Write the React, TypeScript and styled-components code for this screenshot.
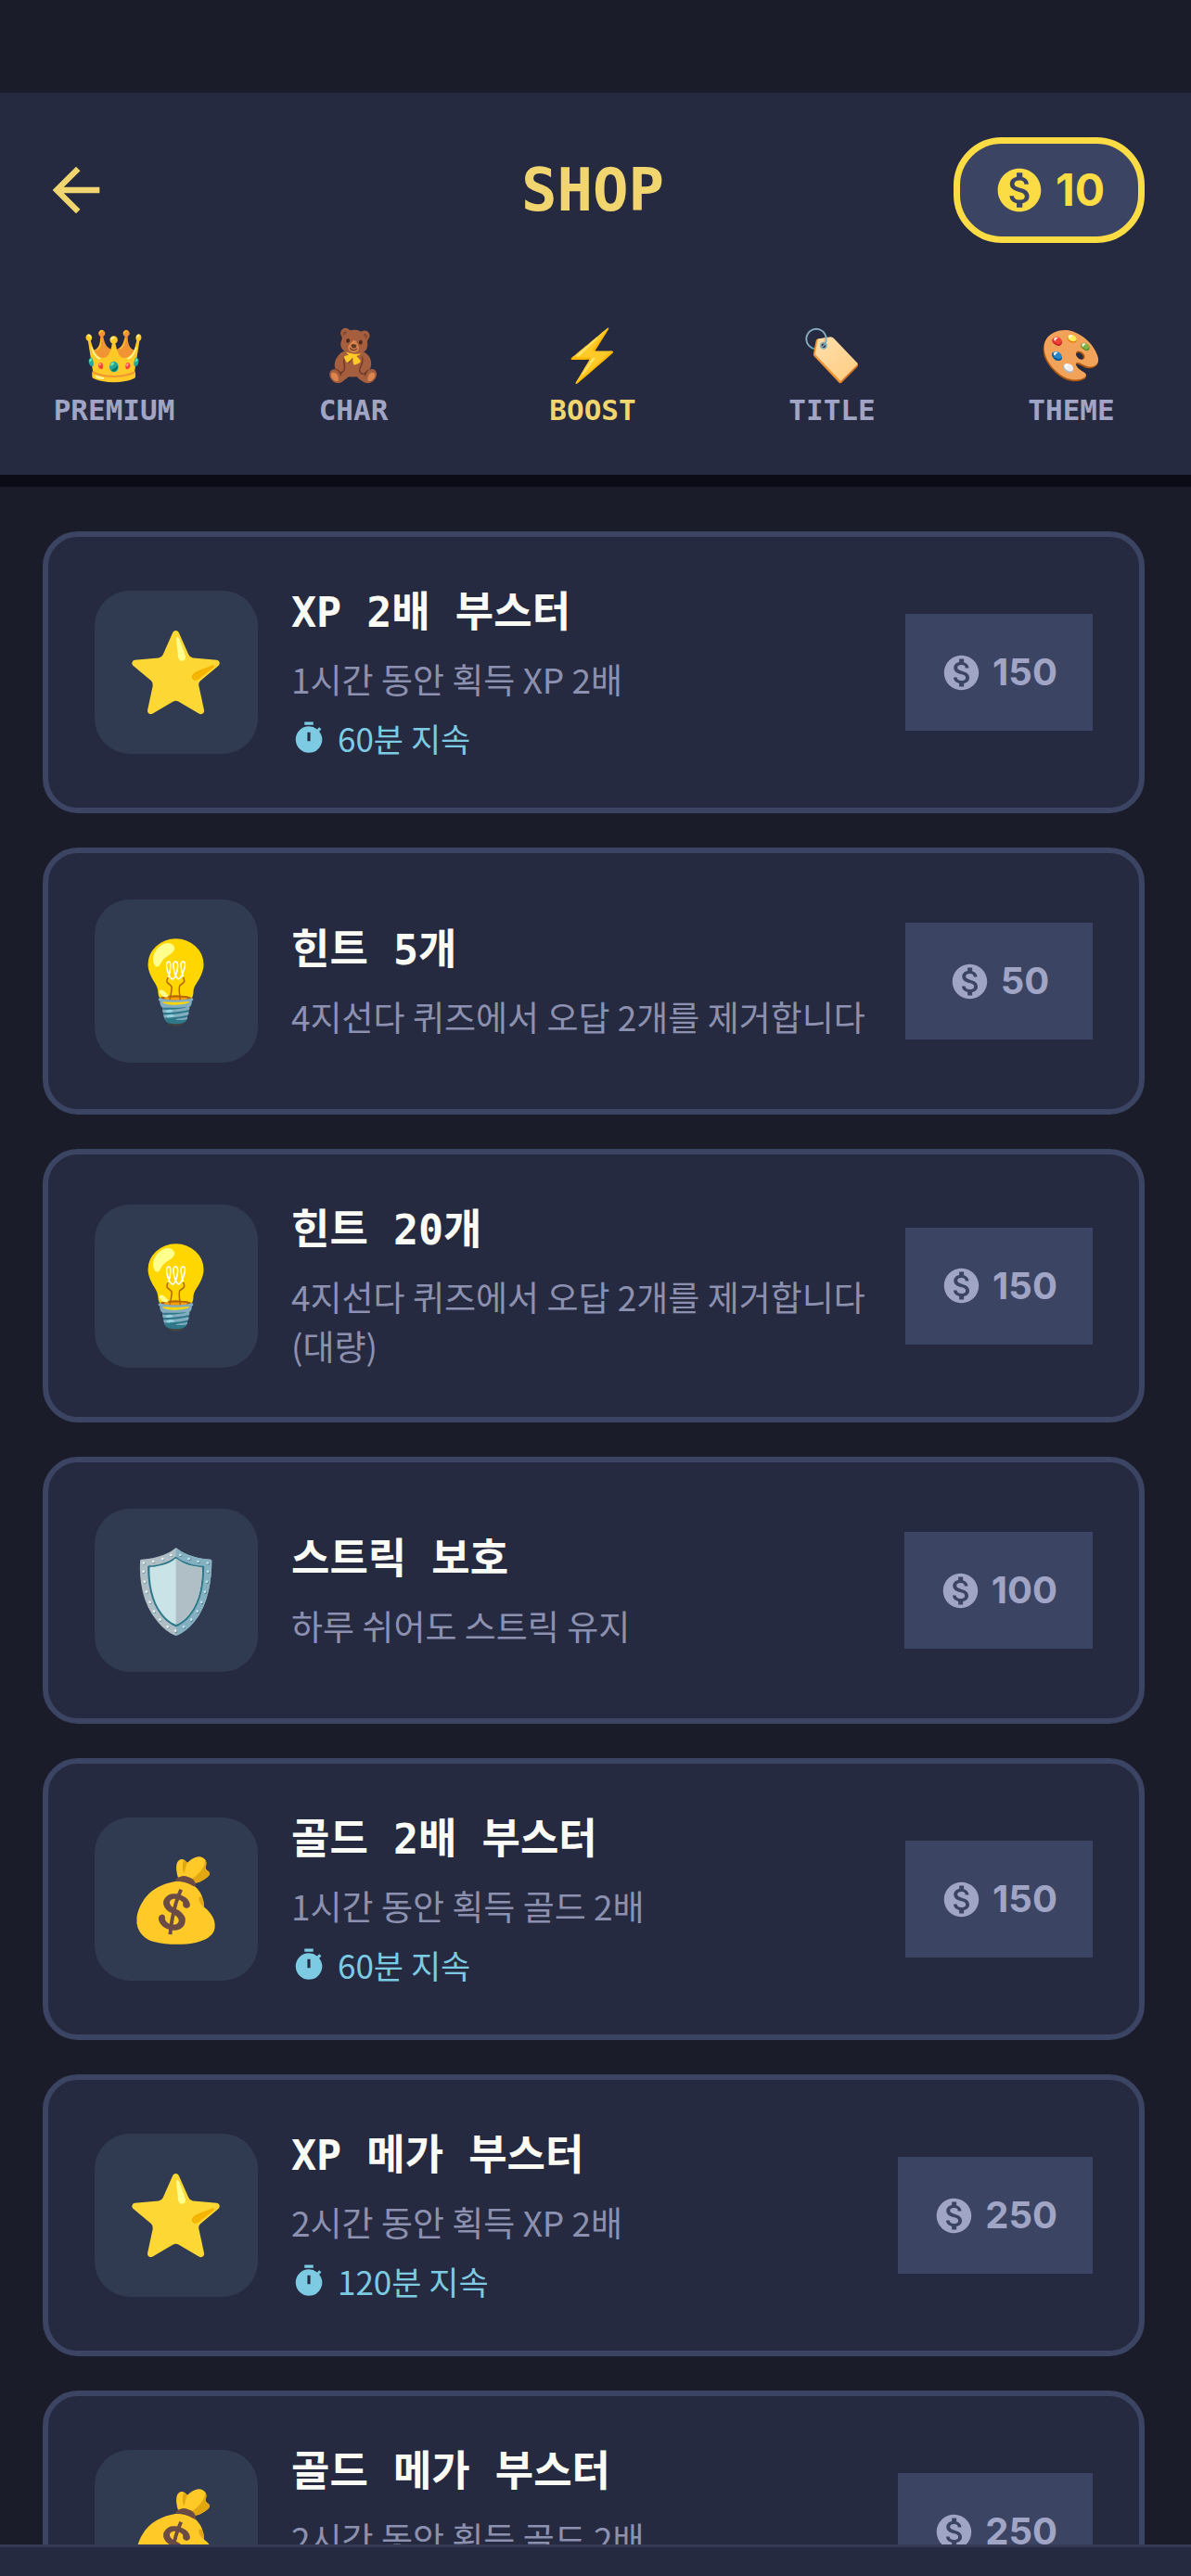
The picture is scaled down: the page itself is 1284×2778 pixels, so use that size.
import React, { useState } from "react";
import styled, { createGlobalStyle } from "styled-components";
import { MdArrowBack, MdMonetizationOn, MdTimer } from "react-icons/md";

const colors = {
  page: "#1a1c29",
  panel: "#262a40",
  line: "#3c4463",
  edge: "#0c0c16",
  title: "#f1d66f",
  gold: "#fbdc45",
  text: "#fbfbf5",
  muted: "#a0a5c5",
  body: "#8d91b0",
  cyan: "#7ccbe2",
  tile: "#303b52",
};

const pixelFont = `"DejaVu Sans Mono", "Noto Sans CJK KR", monospace`;
const numberFont = `Inter, "Noto Sans CJK KR", sans-serif`;
const bodyFont = `"Noto Sans CJK KR", sans-serif`;
const emojiFont = `"Noto Color Emoji", sans-serif`;

const GlobalStyle = createGlobalStyle`
  * {
    box-sizing: border-box;
  }

  body {
    margin: 0;
    background: ${colors.page};
  }

  button {
    border: 0;
    padding: 0;
    background: none;
  }

  h1, h2, p, ul {
    margin: 0;
    padding: 0;
  }
`;

const Screen = styled.div`
  height: 100vh;
  display: flex;
  flex-direction: column;
  overflow: hidden;
  background: ${colors.page};
  padding-top: 100px;
`;

const Header = styled.header`
  flex: none;
  background: ${colors.panel};
  border-bottom: 13px solid ${colors.edge};
  padding-bottom: 50px;
`;

const TitleBar = styled.div`
  display: grid;
  grid-template-columns: 1fr auto 1fr;
  align-items: center;
  padding: 48px 50px 84px 44px;
`;

const BackButton = styled.button`
  justify-self: start;
  display: flex;
  color: ${colors.title};
  font-size: 76px;
`;

const Title = styled.h1`
  color: ${colors.title};
  font: 700 64px / 76px ${pixelFont};
`;

const Balance = styled.div`
  justify-self: end;
  display: flex;
  align-items: center;
  justify-content: center;
  gap: 11px;
  width: 206px;
  height: 114px;
  border: 7px solid ${colors.gold};
  border-radius: 52px;
  background: ${colors.line};
  color: ${colors.gold};
  font: 700 48px / 60px ${numberFont};

  svg {
    font-size: 56px;
  }
`;

const Tabs = styled.nav`
  display: flex;
  justify-content: space-between;
  padding: 0 54px 0 48px;
`;

const Tab = styled.button<{ $active: boolean }>`
  width: 150px;
  display: flex;
  flex-direction: column;
  align-items: center;
  color: ${(props) => (props.$active ? colors.title : colors.muted)};
  font: 700 31px / 40px ${pixelFont};
`;

const TabEmoji = styled.span`
  font: 54px / 76px ${emojiFont};
`;

const List = styled.ul`
  flex: 1;
  min-height: 0;
  overflow: hidden;
  list-style: none;
  display: flex;
  flex-direction: column;
  gap: 37px;
  padding: 48px 50px 0 46px;
`;

const Card = styled.li`
  flex: none;
  display: flex;
  align-items: center;
  gap: 36px;
  padding: 50px;
  border: 6px solid ${colors.line};
  border-radius: 38px;
  background: ${colors.panel};
`;

const Tile = styled.div`
  flex: none;
  display: flex;
  align-items: center;
  justify-content: center;
  width: 176px;
  height: 176px;
  padding-top: 4px;
  border-radius: 38px;
  background: ${colors.tile};
  font: 86px / 100px ${emojiFont};
`;

const Info = styled.div`
  flex: 1;
  min-width: 0;
`;

const Name = styled.h2`
  color: ${colors.text};
  font: 700 45px / 64px ${pixelFont};
`;

const Description = styled.p`
  margin-top: 13px;
  color: ${colors.body};
  font: 400 37px / 53px ${bodyFont};
  word-break: keep-all;
`;

const Duration = styled.p`
  margin-top: 12px;
  display: flex;
  align-items: center;
  gap: 12px;
  color: ${colors.cyan};
  font: 400 35px / 50px ${bodyFont};

  svg {
    font-size: 38px;
  }
`;

const PriceButton = styled.button`
  flex: none;
  display: flex;
  align-items: center;
  justify-content: center;
  gap: 11px;
  min-width: 202px;
  height: 126px;
  padding: 0 38px;
  background: ${colors.line};
  color: ${colors.muted};
  font: 700 40px / 50px ${numberFont};

  svg {
    font-size: 45px;
  }
`;

const BottomBar = styled.footer`
  flex: none;
  height: 34px;
  border-top: 3px solid #343a56;
  background: ${colors.panel};
`;

const tabs = [
  { label: "PREMIUM", emoji: "👑" },
  { label: "CHAR", emoji: "🧸" },
  { label: "BOOST", emoji: "⚡" },
  { label: "TITLE", emoji: "🏷️" },
  { label: "THEME", emoji: "🎨" },
];

interface ShopItem {
  emoji: string;
  name: string;
  description: string;
  minutes?: number;
  price: number;
}

const items: ShopItem[] = [
  {
    emoji: "⭐",
    name: "XP 2배 부스터",
    description: "1시간 동안 획득 XP 2배",
    minutes: 60,
    price: 150,
  },
  {
    emoji: "💡",
    name: "힌트 5개",
    description: "4지선다 퀴즈에서 오답 2개를 제거합니다",
    price: 50,
  },
  {
    emoji: "💡",
    name: "힌트 20개",
    description: "4지선다 퀴즈에서 오답 2개를 제거합니다 (대량)",
    price: 150,
  },
  {
    emoji: "🛡️",
    name: "스트릭 보호",
    description: "하루 쉬어도 스트릭 유지",
    price: 100,
  },
  {
    emoji: "💰",
    name: "골드 2배 부스터",
    description: "1시간 동안 획득 골드 2배",
    minutes: 60,
    price: 150,
  },
  {
    emoji: "⭐",
    name: "XP 메가 부스터",
    description: "2시간 동안 획득 XP 2배",
    minutes: 120,
    price: 250,
  },
  {
    emoji: "💰",
    name: "골드 메가 부스터",
    description: "2시간 동안 획득 골드 2배",
    minutes: 120,
    price: 250,
  },
];

const ItemCard: React.FC<{ item: ShopItem; balance: number }> = (props) => {
  const { item, balance } = props;

  return (
    <Card>
      <Tile>{item.emoji}</Tile>
      <Info>
        <Name>{item.name}</Name>
        <Description>{item.description}</Description>
        {item.minutes && (
          <Duration>
            <MdTimer />
            {`${item.minutes}분 지속`}
          </Duration>
        )}
      </Info>
      <PriceButton disabled={balance < item.price}>
        <MdMonetizationOn />
        {item.price}
      </PriceButton>
    </Card>
  );
};

const App: React.FC = () => {
  const [activeTab, setActiveTab] = useState("BOOST");
  const balance = 10;

  return (
    <Screen>
      <GlobalStyle />
      <Header>
        <TitleBar>
          <BackButton aria-label="Back">
            <MdArrowBack />
          </BackButton>
          <Title>SHOP</Title>
          <Balance>
            <MdMonetizationOn />
            {balance}
          </Balance>
        </TitleBar>
        <Tabs>
          {tabs.map(({ label, emoji }) => (
            <Tab
              key={label}
              $active={label === activeTab}
              onClick={() => setActiveTab(label)}
            >
              <TabEmoji>{emoji}</TabEmoji>
              {label}
            </Tab>
          ))}
        </Tabs>
      </Header>
      <List>
        {items.map((item) => (
          <ItemCard key={item.name} item={item} balance={balance} />
        ))}
      </List>
      <BottomBar />
    </Screen>
  );
};

export default App;
